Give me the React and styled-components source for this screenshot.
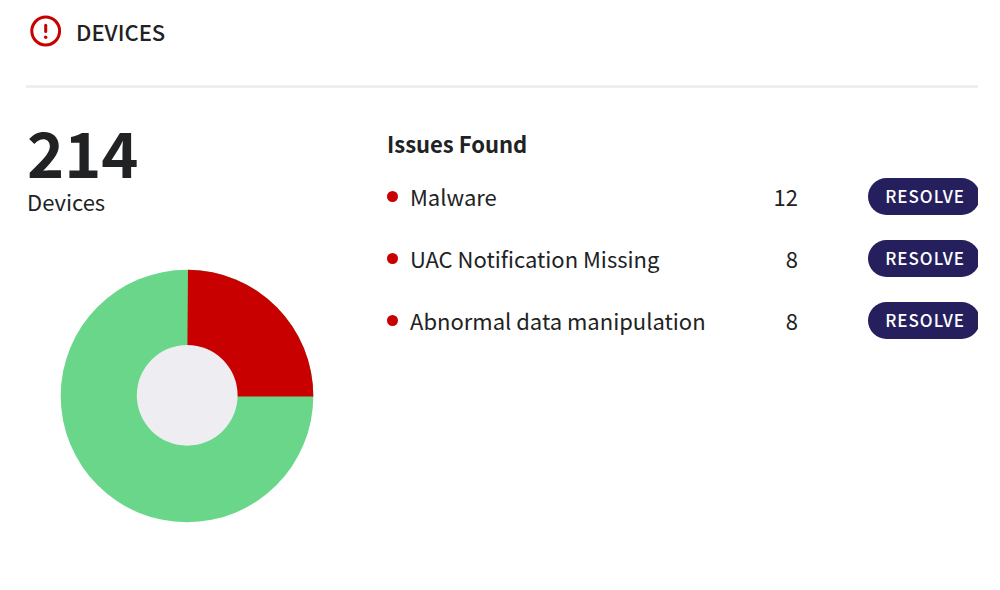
import React from 'react';
import styled, { css, createGlobalStyle } from 'styled-components';

const COLOR = {
    TEXT: '#212224',
    RED: '#c80000',
    GREEN: '#6ad68a',
    NAVY: '#261f5e',
    LINE: '#eeeeee',
    HOLE: '#eeedf2',
    WHITE: '#ffffff',
};

const issues = [
    { name: 'Malware', count: 12 },
    { name: 'UAC Notification Missing', count: 8 },
    { name: 'Abnormal data manipulation', count: 8 },
];

const GlobalStyle = createGlobalStyle`
    * {
        box-sizing: border-box;
    }

    body {
        margin: 0;
        background-color: ${COLOR.WHITE};
        color: ${COLOR.TEXT};
        font-family: "Noto Sans CJK JP", "Noto Sans", sans-serif;
    }
`;

const BodyText = css`
    font-size: 22px;
    line-height: 28px;
    font-weight: 400;
`;

const Card = styled.main`
    padding: 0 22px 0 26px;
`;

const Header = styled.header`
    display: flex;
    align-items: center;
    gap: 13px;
    height: 88px;
    padding: 0 0 24px 3px;
    border-bottom: 3px solid ${COLOR.LINE};
`;

const AlertIcon = styled.svg`
    width: 34px;
    height: 34px;
`;

const Title = styled.h1`
    ${BodyText}
    margin: 0;
    font-weight: 500;
`;

const Content = styled.div`
    display: flex;
    padding-top: 31px;
`;

const Summary = styled.section`
    flex: 0 0 361px;
    padding-left: 1px;
`;

const Total = styled.div`
    margin-bottom: 4px;
    font-size: 63px;
    line-height: 64px;
    font-weight: 700;
`;

const TotalLabel = styled.div`
    ${BodyText}
`;

const Chart = styled.svg`
    display: block;
    width: 254px;
    height: 254px;
    margin: 54px 0 0 33px;
`;

const Issues = styled.section`
    flex: 1;
    min-width: 0;
    padding-top: 10px;
    overflow: hidden;
`;

const IssuesTitle = styled.h2`
    ${BodyText}
    margin: 0 0 8px;
    font-weight: 700;
`;

const IssueTable = styled.table`
    width: 100%;
    border-collapse: collapse;
`;

const IssueRow = styled.tr`
    height: 62px;
`;

const IssueCell = styled.td`
    ${BodyText}
    padding: 0;
    text-align: ${({ $align }) => $align || 'left'};
`;

const IssueName = styled.div`
    display: flex;
    align-items: center;
    gap: 12px;
`;

const Dot = styled.span`
    width: 11px;
    height: 11px;
    border-radius: 50%;
    background-color: ${COLOR.RED};
`;

const ActionCell = styled.td`
    width: 180px;
    padding: 0;
    text-align: right;
`;

const ResolveButton = styled.button`
    height: 37px;
    margin-right: -2px;
    padding: 0 15px 0 17px;
    border: none;
    border-radius: 100px;
    background-color: ${COLOR.NAVY};
    color: ${COLOR.WHITE};
    font-family: inherit;
    font-size: 17px;
    line-height: 20px;
    font-weight: 500;
    letter-spacing: 1px;
    cursor: pointer;
`;

const DonutChart = () => (
    <Chart viewBox="0 0 254 254" aria-hidden="true">
        <circle cx="127" cy="127" r="126.3" fill={COLOR.GREEN} />
        <path d="M127 127.6 L128 0.7 A126.3 126.3 0 0 1 253.3 127.6 Z" fill={COLOR.RED} />
        <circle cx="127.2" cy="126.3" r="50.4" fill={COLOR.HOLE} />
    </Chart>
);

export default () => {
    return (
        <>
            <GlobalStyle />
            <Card>
                <Header>
                    <AlertIcon viewBox="0 0 34 34" fill="none" stroke={COLOR.RED} strokeWidth="3" aria-hidden="true">
                        <circle cx="16.7" cy="17" r="13.9" />
                        <path d="M16.7 11.2 V17.6" strokeLinecap="round" />
                        <circle cx="16.7" cy="23.3" r="1.7" fill={COLOR.RED} stroke="none" />
                    </AlertIcon>
                    <Title>DEVICES</Title>
                </Header>
                <Content>
                    <Summary>
                        <Total>214</Total>
                        <TotalLabel>Devices</TotalLabel>
                        <DonutChart />
                    </Summary>
                    <Issues>
                        <IssuesTitle>Issues Found</IssuesTitle>
                        <IssueTable>
                            <tbody>
                                {issues.map(({ name, count }) => (
                                    <IssueRow key={name}>
                                        <IssueCell>
                                            <IssueName>
                                                <Dot />
                                                {name}
                                            </IssueName>
                                        </IssueCell>
                                        <IssueCell $align="right">{count}</IssueCell>
                                        <ActionCell>
                                            <ResolveButton type="button">RESOLVE</ResolveButton>
                                        </ActionCell>
                                    </IssueRow>
                                ))}
                            </tbody>
                        </IssueTable>
                    </Issues>
                </Content>
            </Card>
        </>
    );
}
